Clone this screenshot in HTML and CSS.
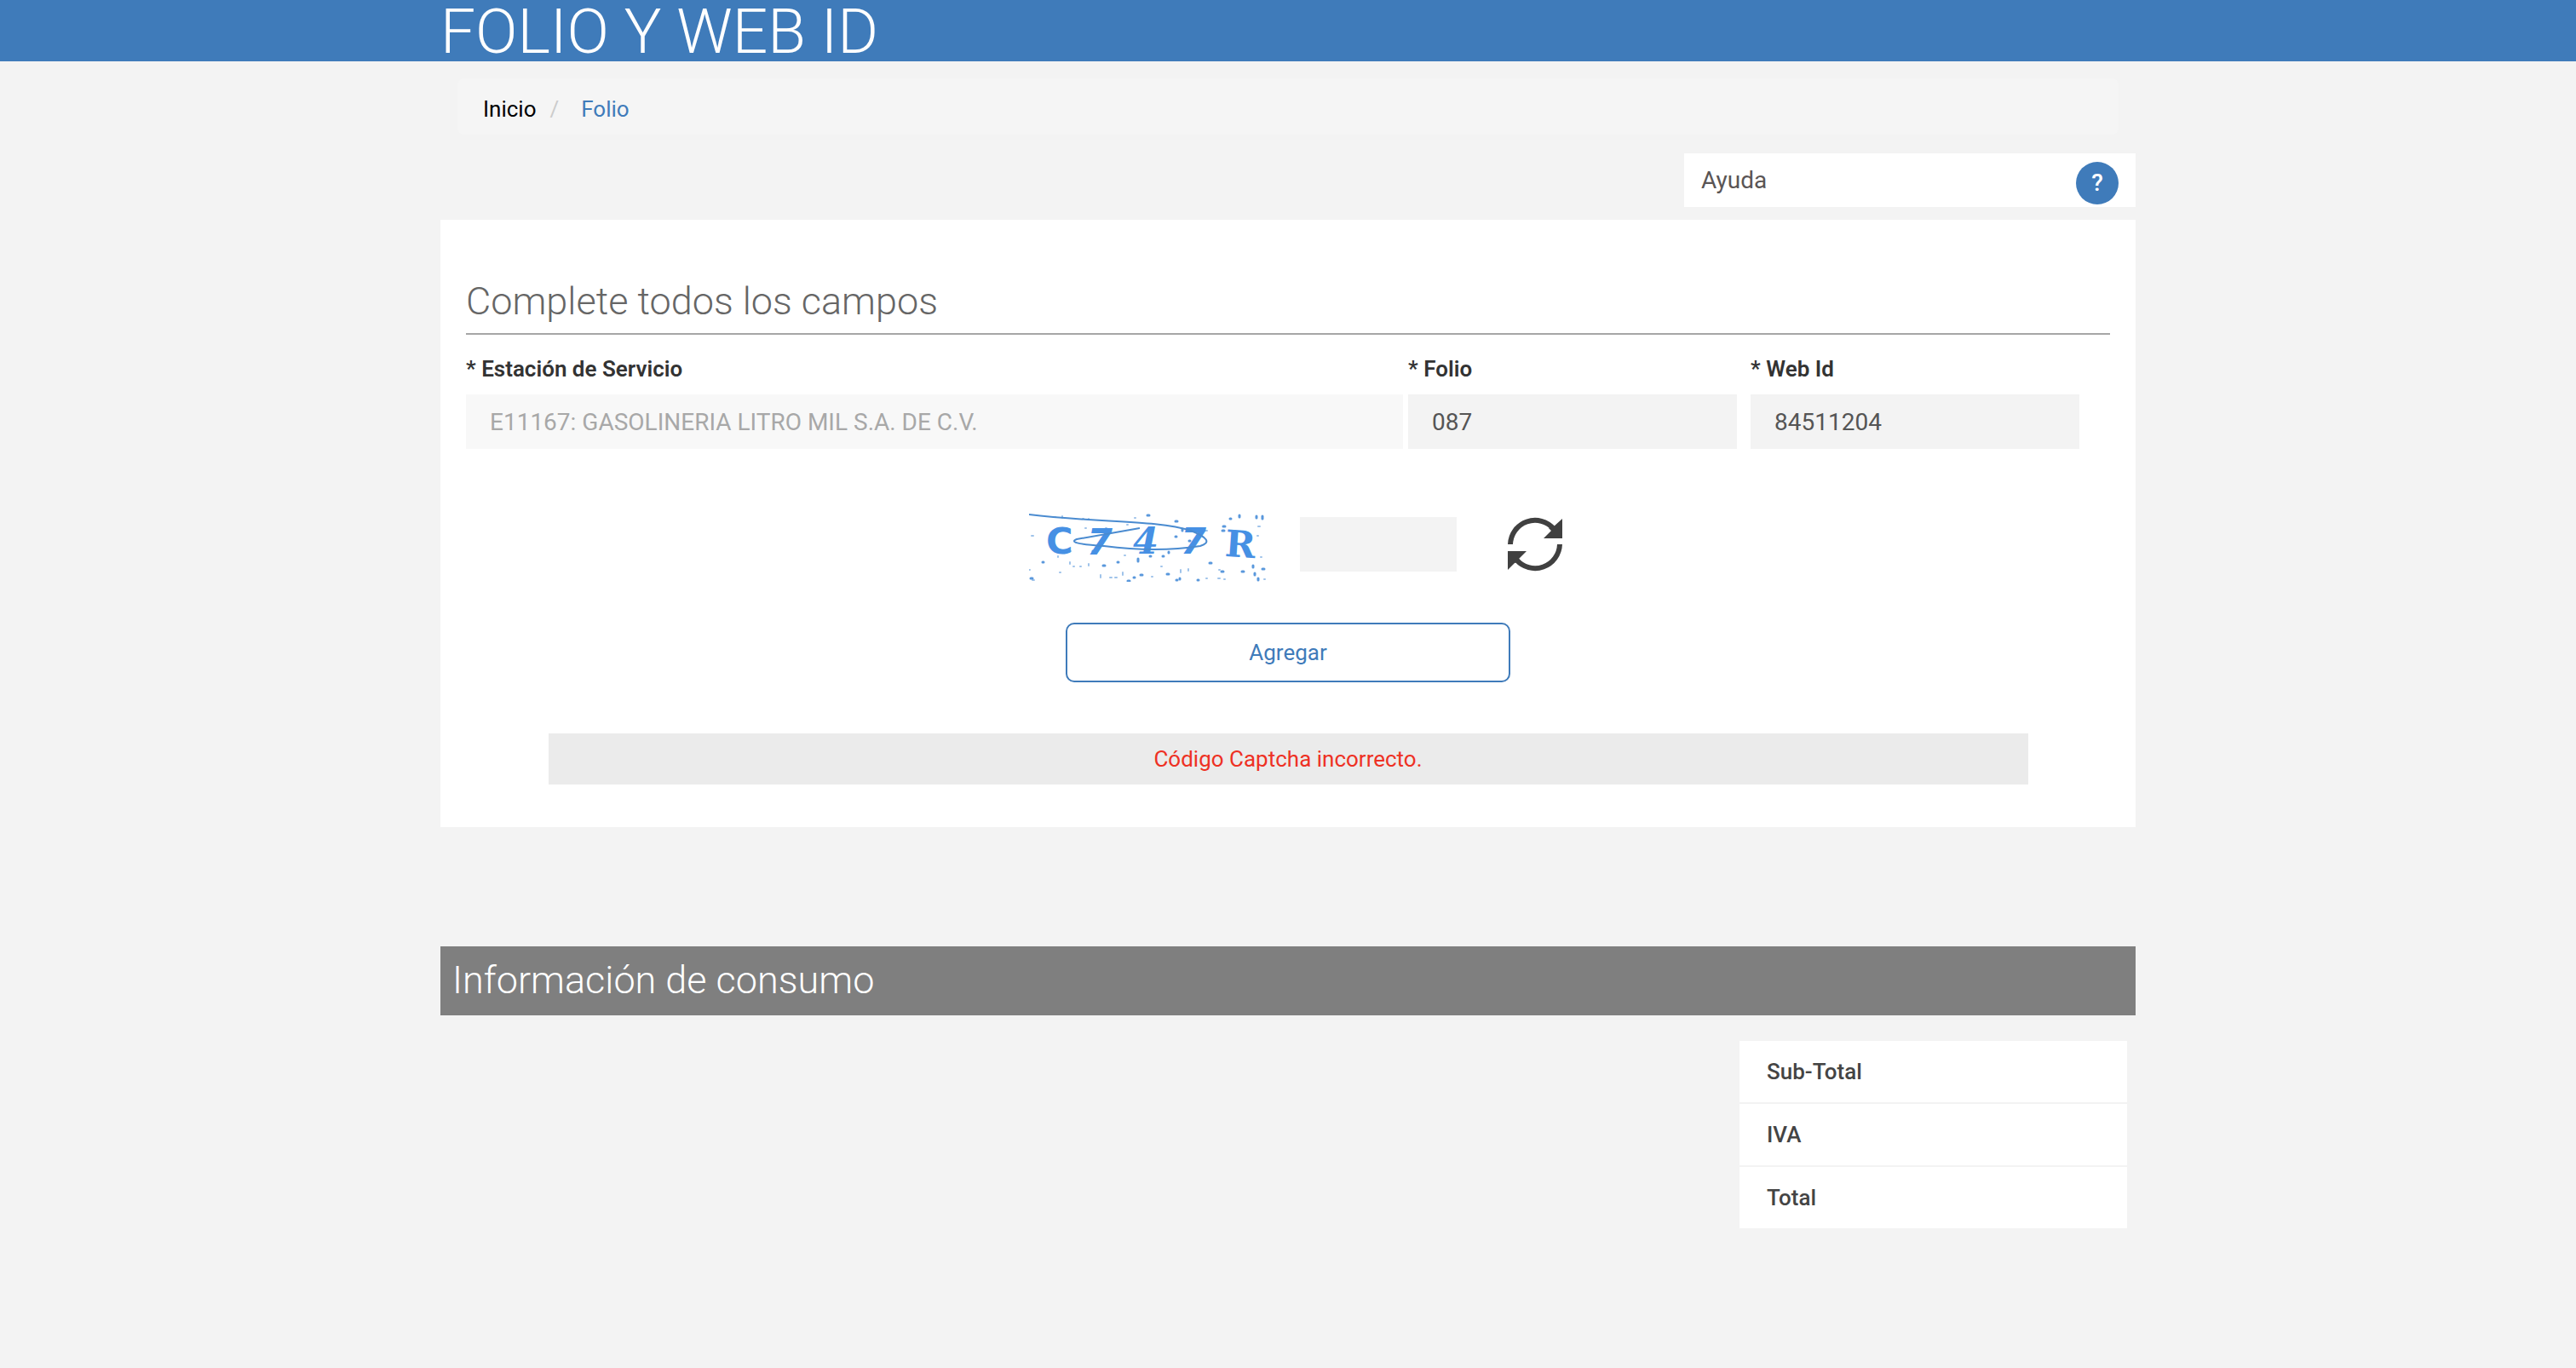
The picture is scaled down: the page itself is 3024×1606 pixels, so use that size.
FILE: index.html
```html
<!DOCTYPE html>
<html lang="es">
<head>
  <meta charset="utf-8">
  <meta name="viewport" content="width=device-width, initial-scale=1">
  <title>Folio y Web ID</title>
  <link rel="stylesheet" href="styles.css">
</head>
<body>
  <header class="banner">
    <div class="container">
      <h1 class="banner-title">FOLIO Y WEB ID</h1>
    </div>
  </header>

  <main class="container">
    <nav class="breadcrumb" aria-label="Ruta">
      <a class="crumb" href="#">Inicio</a>
      <span class="crumb-separator">/</span>
      <a class="crumb crumb-current" href="#">Folio</a>
    </nav>

    <div class="help">
      <span>Ayuda</span>
      <button class="help-button" type="button">?</button>
    </div>

    <form class="card">
      <h2 class="card-title">Complete todos los campos</h2>

      <div class="fields">
        <div class="field field-station">
          <label class="label" for="station">* Estación de Servicio</label>
          <input class="input" id="station" type="text" value="E11167: GASOLINERIA LITRO MIL S.A. DE C.V." disabled>
        </div>
        <div class="field field-folio">
          <label class="label" for="folio">* Folio</label>
          <input class="input" id="folio" type="text" value="087">
        </div>
        <div class="field field-webid">
          <label class="label" for="webid">* Web Id</label>
          <input class="input" id="webid" type="text" value="84511204">
        </div>
      </div>

      <div class="captcha">
        <svg class="captcha-image" viewBox="0 0 280 80" role="img" aria-label="Captcha">
          <g class="captcha-dots">
            <path d="M30 4h1M39 3v2M63 6h1M70 6v1M124 5h1M32 18h1M66 17h1M90 17h1M115 13h1M3 26h2M207 20h2M269 15h2M268 26h1M34 50v1M48 44h1M48 57v2M52 62h1M60 62h1M70 59v2M87 61h1M112 49h1M155 62h1M178 66v3M187 65v2M223 66h1M0 66h1M36 69h1M4 78h2M95 75h2M101 75h2M84 72v3M110 69v3M144 74h1M208 76h1M222 76h2M229 77h1M272 51h1M276 77h1"/>
          </g>
          <g class="captcha-dots captcha-dots-strong">
            <path d="M139 2h2M172 9h2M236 6h1M247 2v2M267 3v2M274 3v3M228 15h2M227 20h2M180 18v2M188 32h1M172 27h1M75 44v2M128 53v3M16 57h1M104 57h1M87 61h2M142 50h1M157 50h1M164 45v1M212 58h2M226 68h2M250 68h2M263 61v2M274 65h2M2 76h2M116 79h2M123 75h1M131 72h2M162 71h2M173 78h1M177 76v1M198 78h1M265 70v2M269 76v2"/>
          </g>
          <g class="captcha-text">
            <text class="round" x="20" y="47">C</text>
            <text class="round slanted" x="68" y="48">7</text>
            <text class="slanted" x="122" y="47">4</text>
            <text class="round slanted" x="178" y="47">7</text>
            <text x="230" y="51" transform="rotate(4 247 38)">R</text>
          </g>
          <path class="captcha-line" d="M0 1C80 11 150 7 190 20Q220 32 201 38Q150 46 88 38C55 36 48 33 56 30L130 17"/>
        </svg>
        <div class="captcha-entry">
          <input class="input captcha-input" type="text" aria-label="Código Captcha">
          <button class="refresh" type="button" aria-label="Cambiar captcha">
            <svg viewBox="0 0 64 64" aria-hidden="true">
              <path class="refresh-arc" d="M3 32A29 29 0 0 1 54 14M61 32A29 29 0 0 1 10 50"/>
              <path class="refresh-head" d="M64 2V25H42L51 16L48 13L54 11ZM0 62V40H22L13 49L16 52L8 54Z"/>
            </svg>
          </button>
        </div>
      </div>

      <button class="submit" type="button">Agregar</button>
      <p class="error" role="alert">Código Captcha incorrecto.</p>
    </form>

    <section class="summary">
      <h2 class="summary-title">Información de consumo</h2>
      <table class="totals">
        <tbody>
          <tr><th scope="row">Sub-Total</th><td></td></tr>
          <tr><th scope="row">IVA</th><td></td></tr>
          <tr><th scope="row">Total</th><td></td></tr>
        </tbody>
      </table>
    </section>
  </main>
</body>
</html>
```

FILE: styles.css
```css
* {
  box-sizing: border-box;
}

body {
  margin: 0;
  background: #f3f3f3;
  color: #333;
  font-family: Roboto, "Liberation Sans", sans-serif;
  font-size: 26px;
  line-height: 40px;
}

button,
input {
  font: inherit;
}

.container {
  width: 100%;
  max-width: 1990px;
  margin: 0 auto;
}

.banner {
  background: #3f7bba;
}

.banner-title {
  margin: 0;
  padding-top: 2px;
  color: #fff;
  font-size: 73px;
  font-weight: 300;
  line-height: 70px;
}

.breadcrumb {
  display: flex;
  align-items: center;
  margin: 20px 20px 22px;
  padding: 16px 30px 10px;
  border-radius: 8px;
  background: #f5f5f5;
}

.crumb {
  color: #000;
  text-decoration: none;
}

.crumb-current {
  color: #3f7bba;
}

.crumb-separator {
  padding: 0 26px 0 16px;
  color: #ccc;
}

.help {
  display: flex;
  align-items: center;
  justify-content: space-between;
  width: 530px;
  height: 63px;
  margin: 0 0 15px auto;
  padding: 0 20px;
  background: #fff;
  color: #5a5555;
  font-size: 28px;
}

.help-button {
  width: 50px;
  height: 50px;
  margin-top: 6px;
  padding: 0;
  border: 0;
  border-radius: 50%;
  background: #3f7bba;
  color: #fff;
  font-weight: 500;
}

.card {
  padding: 66px 30px 50px;
  background: #fff;
}

.card-title {
  margin: 0 0 20px;
  padding-bottom: 7px;
  border-bottom: 2px solid #a6a6a6;
  color: #666;
  font-size: 45px;
  font-weight: 300;
  line-height: 60px;
}

.fields {
  display: flex;
}

.field {
  display: flex;
  flex-direction: column;
  gap: 10px;
  width: 20%;
}

.field-station {
  width: 57%;
}

.field-folio {
  margin: 0 16px 0 6px;
}

.label {
  font-weight: 600;
}

.input {
  width: 100%;
  height: 64px;
  padding: 0 28px;
  border: 0;
  border-radius: 0;
  background: #f3f3f3;
  color: #555;
  font-size: 28px;
}

.input:disabled {
  background: #f8f8f8;
  color: #a8a8a8;
}

.captcha {
  display: flex;
  justify-content: center;
  gap: 38px;
  margin-top: 76px;
  padding-left: 18px;
}

.captcha-image {
  width: 280px;
  height: 80px;
}

.captcha-dots {
  fill: none;
  stroke: #9fc3ea;
  stroke-linecap: round;
  stroke-width: 2;
}

.captcha-dots-strong {
  stroke: #5a98dc;
  stroke-width: 3;
}

.captcha-text {
  fill: #4690e4;
  font-family: "DejaVu Serif", serif;
  font-size: 43px;
  font-weight: 700;
}

.round {
  font-family: "DejaVu Sans", sans-serif;
}

.slanted {
  font-style: italic;
}

.captcha-line {
  fill: none;
  stroke: #4a8bd0;
  stroke-width: 2;
}

.captcha-entry {
  display: flex;
  align-items: center;
  gap: 60px;
  height: 72px;
}

.captcha-input {
  width: 184px;
}

.refresh {
  width: 64px;
  height: 64px;
  padding: 0;
  border: 0;
  background: none;
}

.refresh svg {
  display: block;
}

.refresh-arc {
  fill: none;
  stroke: #404040;
  stroke-width: 6;
}

.refresh-head {
  fill: #404040;
}

.submit {
  display: block;
  width: 27%;
  height: 70px;
  margin: 48px auto 60px;
  border: 2px solid #3f7bba;
  border-radius: 10px;
  background: #fff;
  color: #3f7bba;
}

.error {
  width: 90%;
  margin: 0 auto;
  padding: 10px;
  background: #ebebeb;
  color: #ee3124;
  text-align: center;
}

.summary {
  margin-top: 140px;
}

.summary-title {
  margin: 0 0 30px;
  padding: 10px 14px 11px;
  background: #7f7f7f;
  color: #fff;
  font-size: 45px;
  font-weight: 300;
  line-height: 60px;
}

.totals {
  width: 455px;
  margin: 0 10px 0 auto;
  border-collapse: collapse;
  background: #fff;
  color: #444;
}

.totals th {
  padding: 16px 32px;
  font-weight: 500;
  text-align: left;
}

.totals tr + tr {
  border-top: 2px solid #f3f3f3;
}
```
